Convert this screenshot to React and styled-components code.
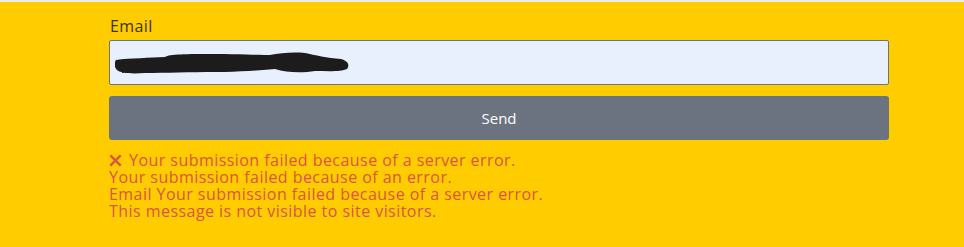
import React from "react";
import styled, { createGlobalStyle } from "styled-components";

const Global = createGlobalStyle`
  html, body { margin: 0; padding: 0; }
  body {
    background: #ffcc00;
    font-family: "Open Sans", "Noto Sans", sans-serif;
  }
`;

const Page = styled.div`
  width: 964px;
  height: 247px;
  box-sizing: border-box;
  border-top: 2px solid #ececec;
  background: #ffcc00;
  padding: 14px 75px 0 109px;
`;

const Form = styled.form`
  width: 780px;
  display: flex;
  flex-direction: column;
`;

const Label = styled.label`
  font-size: 16px;
  letter-spacing: 0.4px;
  line-height: 20px;
  color: #3b3418;
  padding-left: 1px;
  margin-bottom: 4px;
`;

const InputWrap = styled.div`
  position: relative;
  height: 45px;
`;

const Input = styled.input`
  box-sizing: border-box;
  width: 100%;
  height: 45px;
  border: 1px solid #6b7280;
  border-radius: 2px;
  background: #e8f0fe;
  padding: 0 12px;
  font: 15px "Open Sans", sans-serif;
  color: #3a1f7a;
  outline: none;
`;

const Scribble = styled.svg`
  position: absolute;
  left: 6px;
  top: 12px;
  pointer-events: none;
`;

const Button = styled.button`
  margin-top: 11px;
  height: 44px;
  border: none;
  border-radius: 3px;
  background: #6b7280;
  color: #fff;
  font: 15px "Open Sans", sans-serif;
  cursor: pointer;
`;

const Errors = styled.div`
  margin-top: 12px;
  display: flex;
  flex-direction: column;
  color: #dc5442;
  font-size: 16px;
  letter-spacing: 0.45px;
  line-height: 17px;
`;

const Line = styled.div`
  display: flex;
  align-items: center;
  gap: ${(p) => (p.$icon ? "7px" : "0")};
`;

const XIcon = () => (
  <svg width="13" height="13" viewBox="0 0 12 12" aria-hidden="true">
    <path d="M2 2 L10 10 M10 2 L2 10" stroke="#dc5442" strokeWidth="2.2" strokeLinecap="square" />
  </svg>
);

export default function App() {
  return (
    <>
      <Global />
      <Page>
        <Form onSubmit={(e) => e.preventDefault()}>
          <Label htmlFor="email">Email</Label>
          <InputWrap>
            <Input id="email" defaultValue="j" />
            <Scribble width="236" height="24" viewBox="0 0 236 24">
              <path
                d="M1 8 C 15 6, 35 6, 50 5 C 55 2, 70 2, 100 2 C 125 2, 140 3, 155 3 C 165 1, 178 0, 190 1 C 200 3, 212 6, 226 7 C 233 9, 235 13, 232 17 C 226 20, 212 19, 200 19 C 188 21, 172 21, 160 17 C 145 18, 125 20, 100 20 C 75 20, 50 21, 30 21 C 15 22, 5 21, 2 18 C -1 15, -1 11, 1 8 Z"
                fill="#1c1c1c"
              />
            </Scribble>
          </InputWrap>
          <Button type="submit">Send</Button>
          <Errors>
            <Line $icon>
              <XIcon />
              Your submission failed because of a server error.
            </Line>
            <Line>Your submission failed because of an error.</Line>
            <Line>Email Your submission failed because of a server error.</Line>
            <Line>This message is not visible to site visitors.</Line>
          </Errors>
        </Form>
      </Page>
    </>
  );
}
